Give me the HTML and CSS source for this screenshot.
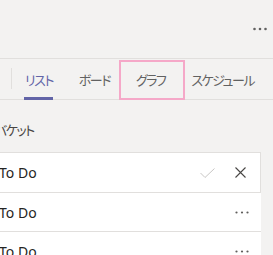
FILE: index.html
```html
<!DOCTYPE html>
<html lang="ja">
<head>
    <meta charset="UTF-8">
    <meta name="viewport" content="width=device-width, initial-scale=1.0">
    <title>Planner</title>
    <link rel="stylesheet" href="styles.css">
</head>
<body>
    <div class="header">
        <svg class="more" width="14" height="4" viewBox="0 0 14 4"><circle cx="1.5" cy="2" r="1.3"/><circle cx="7" cy="2" r="1.3"/><circle cx="12.5" cy="2" r="1.3"/></svg>
    </div>
    <div class="tabs">
        <div class="sep"></div>
        <div class="tab active">リスト</div>
        <div class="tab">ボード</div>
        <div class="tab">グラフ</div>
        <div class="tab">スケジュール</div>
        <div class="mark"></div>
    </div>
    <div class="content">
        <div class="label">バケット</div>
        <div class="list">
            <div class="row editing">
                <span class="name">To Do</span>
                <svg class="check" width="15" height="10" viewBox="0 0 15 10"><path d="M0.5 5 L5 9.5 L14.5 0.5" fill="none" stroke="#c8c6c4" stroke-width="1"/></svg>
                <svg class="close" width="11" height="11" viewBox="0 0 11 11"><path d="M0.5 0.5 L10.5 10.5 M10.5 0.5 L0.5 10.5" fill="none" stroke="#484644" stroke-width="1.1"/></svg>
            </div>
            <div class="row">
                <span class="name">To Do</span>
                <svg class="dots" width="14" height="3" viewBox="0 0 14 3"><circle cx="1.5" cy="1.5" r="1.1"/><circle cx="7" cy="1.5" r="1.1"/><circle cx="12.5" cy="1.5" r="1.1"/></svg>
            </div>
            <div class="row">
                <span class="name">To Do</span>
                <svg class="dots" width="14" height="3" viewBox="0 0 14 3"><circle cx="1.5" cy="1.5" r="1.1"/><circle cx="7" cy="1.5" r="1.1"/><circle cx="12.5" cy="1.5" r="1.1"/></svg>
            </div>
        </div>
    </div>
</body>
</html>
```

FILE: styles.css
```css
body{
    margin: 0;
    background-color: #f3f2f1;
    font-family: "Noto Sans", "Noto Sans CJK JP", sans-serif;
    overflow: hidden;
}
.header{
    height: 58px;
    display: flex;
    justify-content: flex-end;
    align-items: center;
    padding-right: 6px;
}
.more{
    fill: #616161;
}
.tabs{
    position: relative;
    display: flex;
    height: 40px;
    border-top: 1px solid #e1dfdd;
    border-bottom: 1px solid #e1dfdd;
}
.sep{
    flex-shrink: 0;
    width: 1px;
    margin: 9px 0 10px 11px;
    background-color: #e1dfdd;
}
.tab{
    position: relative;
    flex-shrink: 0;
    display: flex;
    align-items: center;
    padding: 0 13px;
    white-space: nowrap;
    font-family: "Noto Sans CJK JP", sans-serif;
    font-feature-settings: "palt";
    font-size: 13px;
    letter-spacing: -1.5px;
    color: #616161;
}
.tab.active{
    color: #6264a7;
}
.tab.active::after{
    content: "";
    position: absolute;
    left: 12px;
    right: 13px;
    bottom: -1px;
    height: 3px;
    background-color: #6264a7;
}
.mark{
    position: absolute;
    left: 119px;
    top: 1px;
    width: 62px;
    height: 36px;
    border: 2px solid #f5a8c8;
}
.label{
    margin: 20px 0 12px -5px;
    line-height: 20px;
    white-space: nowrap;
    font-family: "Noto Sans CJK JP", sans-serif;
    font-feature-settings: "palt";
    font-size: 13px;
    letter-spacing: -1.5px;
    color: #484644;
}
.list{
    margin: 0 12px 0 -21px;
}
.row{
    display: flex;
    align-items: center;
    height: 38px;
    padding: 0 12px 0 20px;
    background-color: #ffffff;
    border-bottom: 1px solid #e1dfdd;
}
.row.editing{
    height: 39px;
    border: 1px solid #e1dfdd;
    padding: 0 14px 0 19px;
}
.name{
    flex: 1;
    font-size: 14px;
    color: #252423;
}
.check{
    margin-right: 20px;
}
.dots{
    fill: #605e5c;
}
```
